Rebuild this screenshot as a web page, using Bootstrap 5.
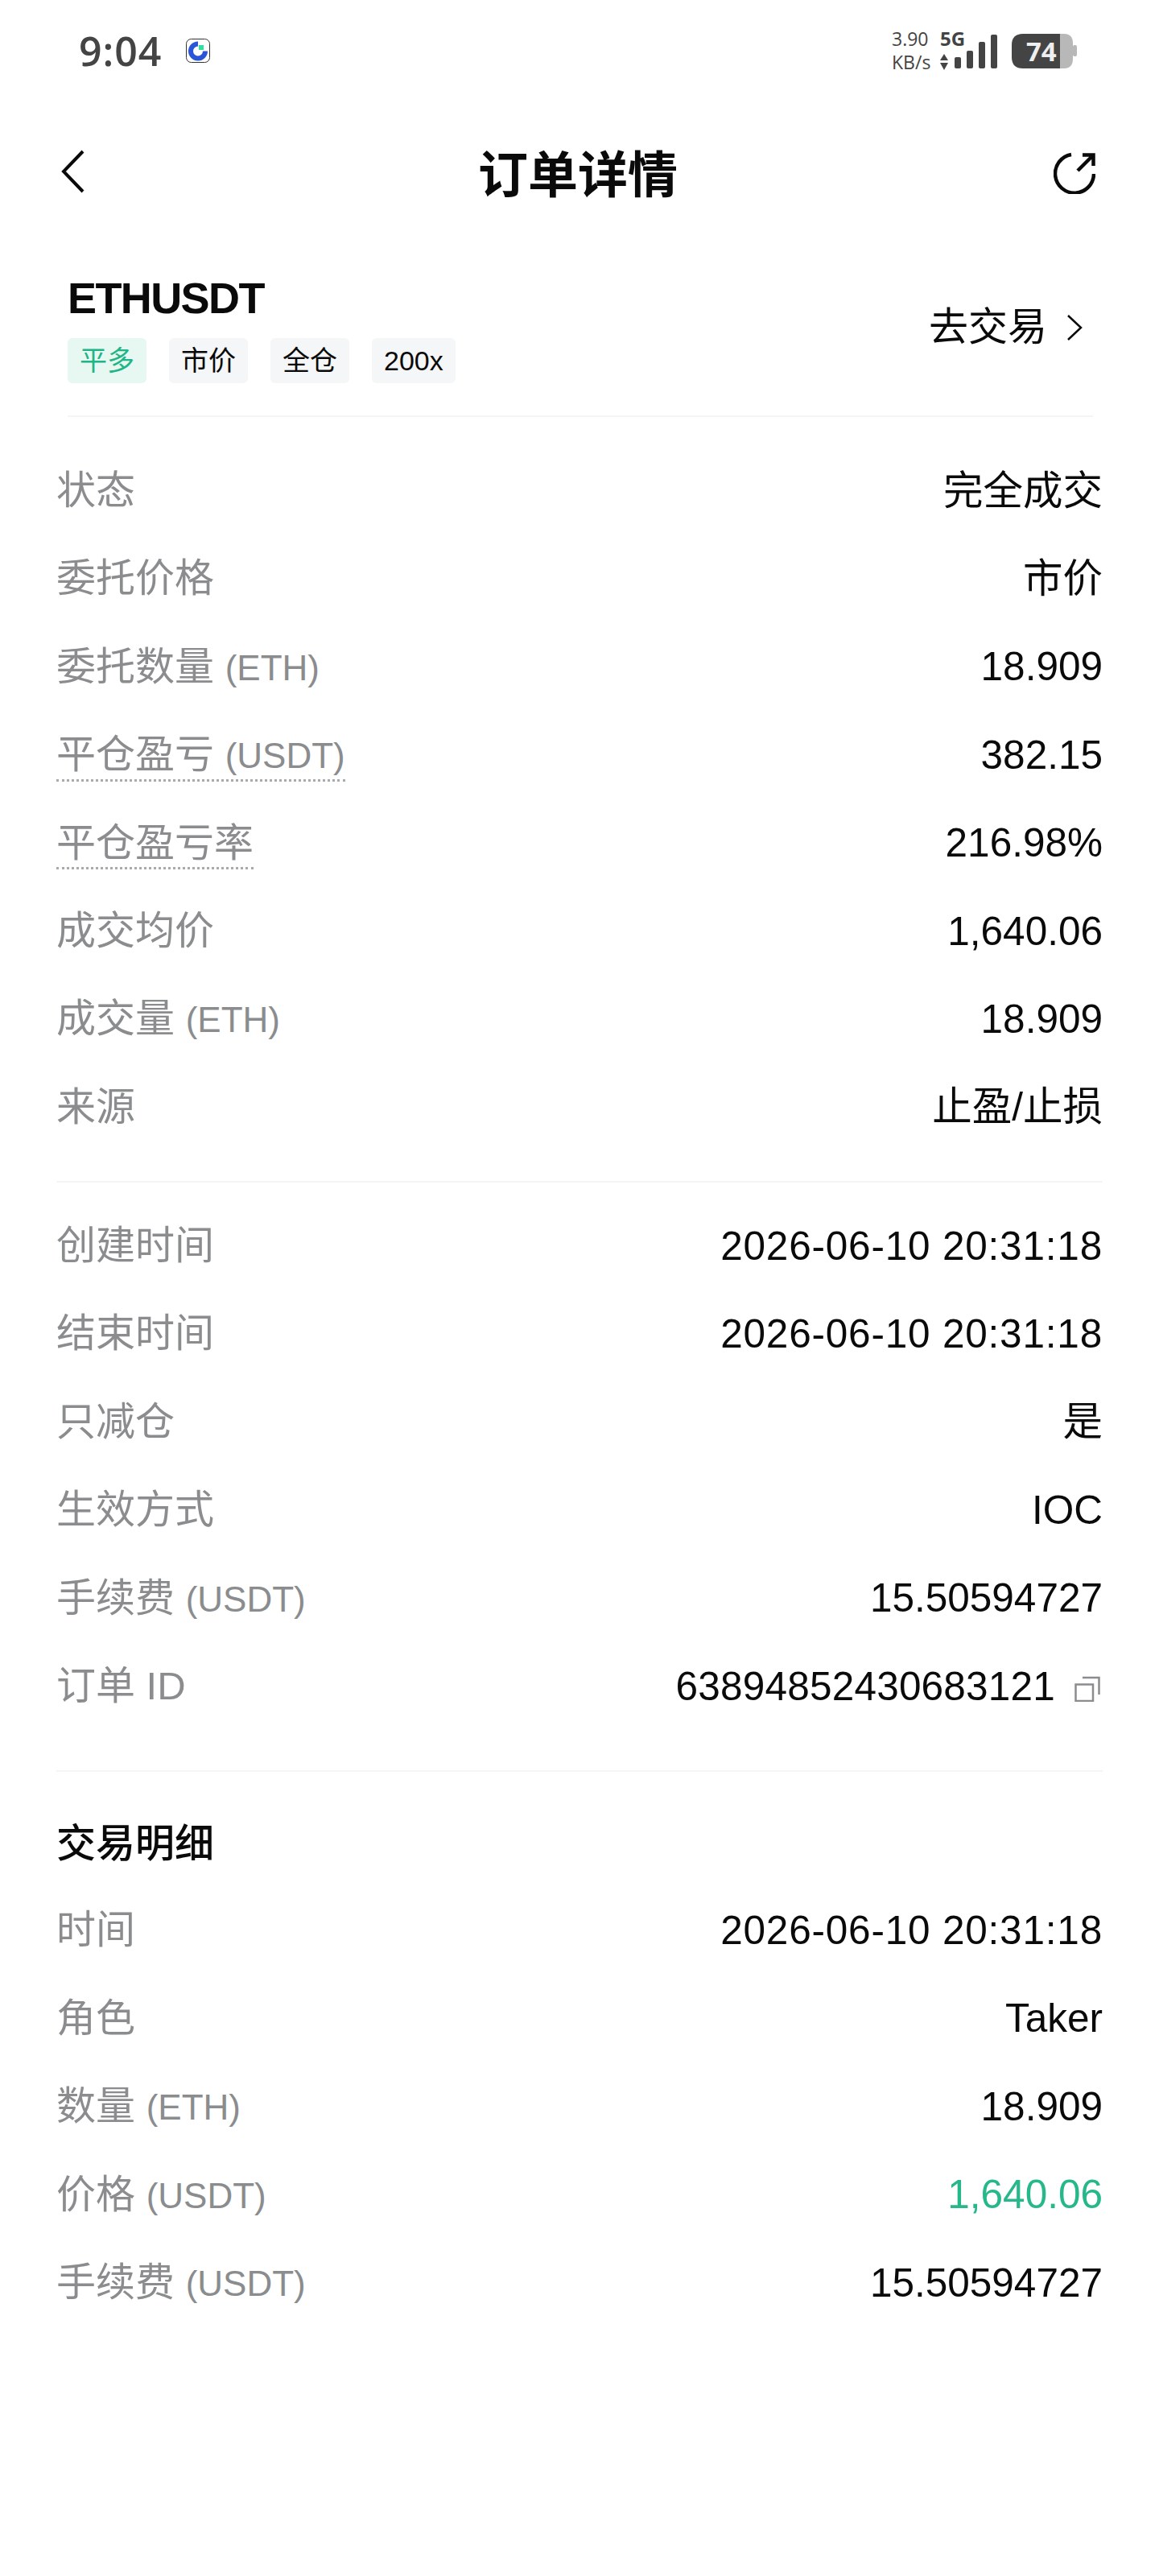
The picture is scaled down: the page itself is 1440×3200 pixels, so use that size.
<!DOCTYPE html>
<html lang="zh-CN">
<head>
  <meta charset="UTF-8">
  <meta name="viewport" content="width=device-width, initial-scale=1">
  <title>订单详情</title>
  <link href="https://cdn.jsdelivr.net/npm/bootstrap@5.3.3/dist/css/bootstrap.min.css" rel="stylesheet">
  <style>
    body { background: #fff; color: #0a0a0a; font-family: "Liberation Sans", "Noto Sans CJK SC", sans-serif; }
    .phone-page { width: 1440px; height: 3200px; overflow: hidden; }

    .status-strip { height: 126px; padding: 0 0 0 98px; color: #444; }
    .status-time { font-family: "Open Sans", "Liberation Sans", sans-serif; font-size: 50px; font-weight: 600; line-height: 1; width: 104px; letter-spacing: 1px; }
    .app-logo { margin-left: 29px; }
    .status-right { margin-left: auto; margin-right: 99px; }
    .net-speed { font-family: "Open Sans", sans-serif; font-size: 23px; line-height: 29px; width: 60px; white-space: nowrap; }
    .signal-icon { margin-right: 17px; }

    .title-bar { height: 186px; padding: 0 79px 0 75px; }
    .title-bar h1 { font-size: 62px; font-weight: 700; margin: 0; }
    .title-side { width: 80px; }
    .back-icon { margin-bottom: 12px; }
    .refresh-icon { margin-bottom: 8px; }

    .symbol-block { height: 206px; margin: 0 82px 0 84px; border-bottom: 2px solid #f4f5f6; padding-bottom: 14px; }
    .symbol-name { font-size: 54px; font-weight: 700; line-height: 64px; letter-spacing: -1.6px; }
    .tag-list { gap: 28px; margin-top: 18px; }
    .order-tag { background: #f5f6f7; font-size: 34px; height: 56px; line-height: 56px; padding: 0 15px; border-radius: 6px; }
    .order-tag-long { background: #e6f8f1; color: #1fb587; }
    .trade-link { font-size: 49px; gap: 24px; margin-right: 13px; }

    .detail-block { padding: 0 70px; }
    .detail-block-first { padding-top: 37px; padding-bottom: 37px; }
    .detail-block-second { padding-bottom: 50px; }
    .info-line { height: 109.4px; font-size: 49px; }
    .info-label { color: #8a8c8e; }
    .info-label .unit { font-size: 44px; }
    .info-value { font-size: 49.5px; }
    .value-date { letter-spacing: .8px; }
    .value-id { letter-spacing: .2px; }
    .dotted-label { border-bottom: 3px dotted #a8aaac; line-height: 1.15; padding-bottom: 2px; margin-top: 4px; }
    .split-line { height: 2px; background: #f4f5f6; margin: 0 70px; }
    .block-heading { font-size: 49px; font-weight: 500; height: 106px; margin-top: 36px; }
    .text-rise { color: #26b78a; }
    .copy-icon { margin-left: 24px; margin-right: 3px; margin-top: 6px; }
  </style>
</head>
<body>

<div class="phone-page">

  <div class="status-strip d-flex align-items-center">
    <span class="status-time">9:04</span>
    <svg class="app-logo" width="30" height="30" viewBox="0 0 30 30">
      <rect x=".5" y=".5" width="29" height="29" rx="6" fill="#fff" stroke="#333"/>
      <path d="M15 3.500 A12 12 0 1 0 27 15.500 H21 A6 6 0 1 1 15 9.500 Z" fill="#2a55d8"/>
      <rect x="16" y="8" width="6" height="6" fill="#2fe0a0"/>
    </svg>
    <div class="status-right d-flex align-items-center">
      <div class="net-speed">3.90<br>KB/s</div>
      <svg class="signal-icon" width="72" height="68" viewBox="1168 29 72 68">
        <text x="1168" y="57" font-family="Open Sans, sans-serif" font-size="24" font-weight="700" fill="#444">5G</text>
        <path d="M1173 67 L1178 75 H1168Z M1173 87 L1178 78 H1168Z" fill="#444"/>
        <rect x="1186" y="71" width="8" height="14" rx="2" fill="#444"/>
        <rect x="1201" y="63" width="8" height="22" rx="2" fill="#444"/>
        <rect x="1216" y="52" width="8" height="33" rx="2" fill="#444"/>
        <rect x="1231" y="43" width="8" height="42" rx="2" fill="#444"/>
      </svg>
      <svg width="84" height="45" viewBox="1257 41 84 45">
        <path d="M1317 42 H1322 Q1333 42 1333 54 V73 Q1333 85 1322 85 H1317Z" fill="#b8b8b8"/>
        <rect x="1333" y="56" width="5" height="14" rx="2" fill="#b8b8b8"/>
        <path d="M1271 42 H1317 V85 H1271 Q1257 85 1257 71 V56 Q1257 42 1271 42Z" fill="#444"/>
        <text x="1275" y="76" font-family="Open Sans, sans-serif" font-size="33" font-weight="700" fill="#eee">74</text>
      </svg>
    </div>
  </div>

  <div class="title-bar d-flex align-items-center justify-content-between">
    <div class="title-side">
      <svg class="back-icon" width="30" height="54" viewBox="0 0 30 54"><path d="M28 2 L4 27 L28 52" fill="none" stroke="#0a0a0a" stroke-width="4"/></svg>
    </div>
    <h1>订单详情</h1>
    <div class="title-side text-end">
      <svg class="refresh-icon" width="52" height="52" viewBox="0 0 52 52"><path d="M22 3 A24 24 0 1 0 50 27" fill="none" stroke="#0a0a0a" stroke-width="4.500"/><path d="M30 23 L49 4 M36 3.500 H49.500 V17" fill="none" stroke="#0a0a0a" stroke-width="4.500"/></svg>
    </div>
  </div>

  <div class="symbol-block d-flex justify-content-between align-items-center">
    <div>
      <div class="symbol-name">ETHUSDT</div>
      <div class="tag-list d-flex">
        <span class="order-tag order-tag-long">平多</span>
        <span class="order-tag">市价</span>
        <span class="order-tag">全仓</span>
        <span class="order-tag">200x</span>
      </div>
    </div>
    <div class="trade-link d-flex align-items-center">
      <span>去交易</span>
      <svg width="20" height="32" viewBox="0 0 20 32"><path d="M2 1 L18 16 L2 31" fill="none" stroke="#0a0a0a" stroke-width="2.500"/></svg>
    </div>
  </div>

  <div class="detail-block detail-block-first">
    <div class="info-line d-flex justify-content-between align-items-center"><span class="info-label">状态</span><span class="info-value">完全成交</span></div>
    <div class="info-line d-flex justify-content-between align-items-center"><span class="info-label">委托价格</span><span class="info-value">市价</span></div>
    <div class="info-line d-flex justify-content-between align-items-center"><span class="info-label">委托数量 <span class="unit">(ETH)</span></span><span class="info-value">18.909</span></div>
    <div class="info-line d-flex justify-content-between align-items-center"><span class="info-label dotted-label">平仓盈亏 <span class="unit">(USDT)</span></span><span class="info-value">382.15</span></div>
    <div class="info-line d-flex justify-content-between align-items-center"><span class="info-label dotted-label">平仓盈亏率</span><span class="info-value">216.98%</span></div>
    <div class="info-line d-flex justify-content-between align-items-center"><span class="info-label">成交均价</span><span class="info-value">1,640.06</span></div>
    <div class="info-line d-flex justify-content-between align-items-center"><span class="info-label">成交量 <span class="unit">(ETH)</span></span><span class="info-value">18.909</span></div>
    <div class="info-line d-flex justify-content-between align-items-center"><span class="info-label">来源</span><span class="info-value">止盈/止损</span></div>
  </div>

  <div class="split-line"></div>

  <div class="detail-block detail-block-second pt-4">
    <div class="info-line d-flex justify-content-between align-items-center"><span class="info-label">创建时间</span><span class="info-value value-date">2026-06-10 20:31:18</span></div>
    <div class="info-line d-flex justify-content-between align-items-center"><span class="info-label">结束时间</span><span class="info-value value-date">2026-06-10 20:31:18</span></div>
    <div class="info-line d-flex justify-content-between align-items-center"><span class="info-label">只减仓</span><span class="info-value">是</span></div>
    <div class="info-line d-flex justify-content-between align-items-center"><span class="info-label">生效方式</span><span class="info-value">IOC</span></div>
    <div class="info-line d-flex justify-content-between align-items-center"><span class="info-label">手续费 <span class="unit">(USDT)</span></span><span class="info-value">15.50594727</span></div>
    <div class="info-line d-flex justify-content-between align-items-center">
      <span class="info-label">订单 ID</span>
      <span class="info-value value-id d-flex align-items-center">63894852430683121
        <svg class="copy-icon" width="32" height="32" viewBox="0 0 32 32"><path d="M1.500 10.500 H23 V31 H1.500Z" fill="none" stroke="#8a8c8e" stroke-width="2.500"/><path d="M10 2 H30.500 V23" fill="none" stroke="#8a8c8e" stroke-width="2.500"/></svg>
      </span>
    </div>
  </div>

  <div class="split-line"></div>

  <div class="detail-block">
    <div class="block-heading d-flex align-items-center">交易明细</div>
    <div class="info-line d-flex justify-content-between align-items-center"><span class="info-label">时间</span><span class="info-value value-date">2026-06-10 20:31:18</span></div>
    <div class="info-line d-flex justify-content-between align-items-center"><span class="info-label">角色</span><span class="info-value">Taker</span></div>
    <div class="info-line d-flex justify-content-between align-items-center"><span class="info-label">数量 <span class="unit">(ETH)</span></span><span class="info-value">18.909</span></div>
    <div class="info-line d-flex justify-content-between align-items-center"><span class="info-label">价格 <span class="unit">(USDT)</span></span><span class="info-value text-rise">1,640.06</span></div>
    <div class="info-line d-flex justify-content-between align-items-center"><span class="info-label">手续费 <span class="unit">(USDT)</span></span><span class="info-value">15.50594727</span></div>
  </div>

</div>

<script src="https://cdn.jsdelivr.net/npm/bootstrap@5.3.3/dist/js/bootstrap.bundle.min.js"></script>
</body>
</html>
